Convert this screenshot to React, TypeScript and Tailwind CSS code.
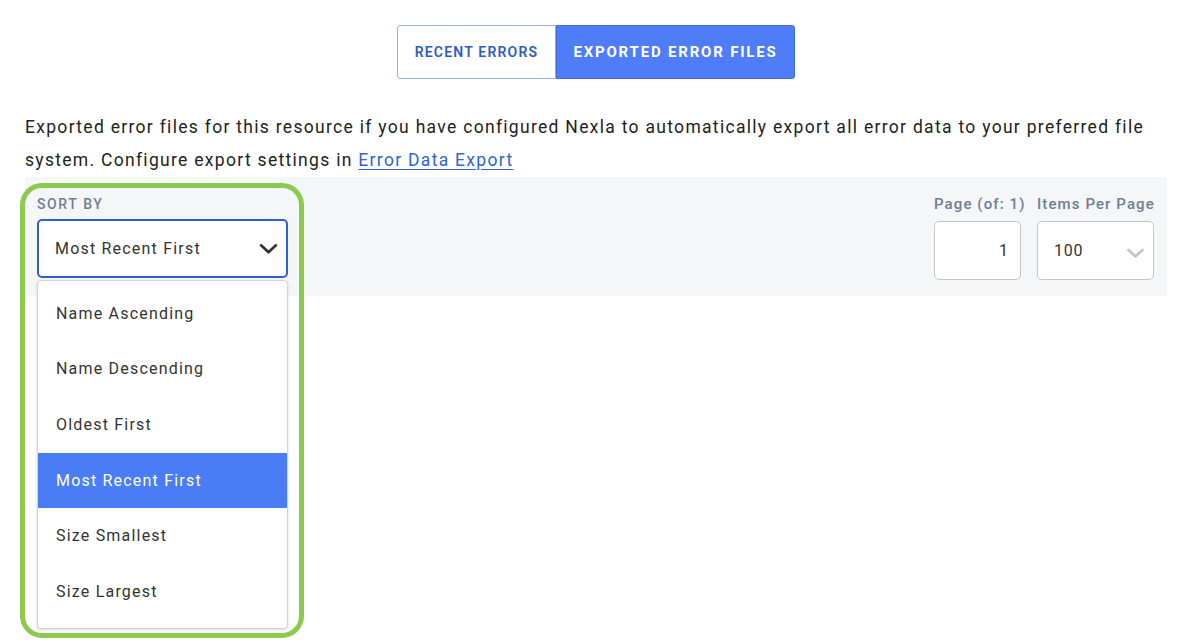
import { useState } from 'react'

const SORT_OPTIONS = [
  'Name Ascending',
  'Name Descending',
  'Oldest First',
  'Most Recent First',
  'Size Smallest',
  'Size Largest',
]

function Chevron({ className }: { className?: string }) {
  return (
    <svg viewBox="0 0 18 10" className={className} fill="none" stroke="currentColor" strokeWidth="2.6" strokeLinecap="round" strokeLinejoin="round">
      <path d="M2 2l7 6.5L16 2" />
    </svg>
  )
}

export default function App() {
  const [tab, setTab] = useState<'recent' | 'exported'>('exported')
  const [sort, setSort] = useState('Most Recent First')

  return (
    <div className="relative min-h-[641px] bg-white text-[#222] font-['Roboto',sans-serif]">
      <div className="flex justify-center pt-[25px]">
        <button
          onClick={() => setTab('recent')}
          className={`h-[54px] w-[159px] rounded-l-[3px] border text-[14px] font-semibold tracking-[1.2px] ${
            tab === 'recent' ? 'bg-[#4f7cf7] text-white border-[#3d69e6]' : 'bg-white text-[#2c5bc8] border-[#96ade8]'
          }`}
        >
          RECENT ERRORS
        </button>
        <button
          onClick={() => setTab('exported')}
          className={`h-[54px] w-[239px] rounded-r-[3px] border text-[15px] font-bold tracking-[1.8px] ${
            tab === 'exported' ? 'bg-[#4f7cf7] text-white border-[#3d69e6]' : 'bg-white text-[#2c5bc8] border-[#96ade8]'
          }`}
        >
          EXPORTED ERROR FILES
        </button>
      </div>

      <p className="mt-[32px] px-[25px] text-[17.5px] leading-[33px] tracking-[1.3px] text-[#222]">
        Exported error files for this resource if you have configured Nexla to automatically export all error data to your preferred file
        system. Configure export settings in{' '}
        <a href="#" className="text-[#2f63d6] underline underline-offset-[3px]">
          Error Data Export
        </a>
      </p>

      <div className="mx-[25px] flex h-[119px] items-start justify-between bg-[#f5f6f8] pl-[12px] pr-[13px] pt-[18px]">
        <div className="relative w-[251px]">
          <div className="text-[14px] font-medium leading-[18px] tracking-[1.6px] text-[#6f7e95]">SORT BY</div>
          <button className="mt-[6px] flex h-[59px] w-[251px] items-center justify-between rounded-[5px] border-2 border-[#2f5fd6] bg-white pl-[16px] pr-[8px] text-[16px] tracking-[1.2px] text-[#333]">
            <span>{sort}</span>
            <Chevron className="h-[11px] w-[19px] text-[#333]" />
          </button>
          <ul className="absolute left-0 top-full z-10 mt-[2px] w-[251px] rounded-[4px] border border-[#d4d4d4] bg-white pt-[5px] pb-[8px] shadow-[0_1px_3px_rgba(0,0,0,0.15)]">
            {SORT_OPTIONS.map((o) => (
              <li
                key={o}
                onClick={() => setSort(o)}
                className={`flex h-[55.6px] cursor-pointer items-center pl-[18px] text-[16px] tracking-[1.2px] ${
                  o === sort ? 'bg-[#4a7cf5] text-white' : 'text-[#333]'
                }`}
              >
                {o}
              </li>
            ))}
          </ul>
        </div>

        <div className="flex gap-[16px]">
          <div className="flex w-[87px] flex-col items-start">
            <div className="whitespace-nowrap text-[15px] font-medium leading-[18px] tracking-[1.1px] text-[#6f7e95]">Page (of: 1)</div>
            <div className="mt-[8px] flex h-[59px] w-[87px] items-center justify-end rounded-[5px] border border-[#c6c6c6] bg-white pr-[12px] text-[16px] text-[#333]">
              1
            </div>
          </div>
          <div className="flex w-[117px] flex-col items-start">
            <div className="whitespace-nowrap text-[15px] font-medium leading-[18px] tracking-[1.1px] text-[#6f7e95]">Items Per Page</div>
            <div className="mt-[8px] flex h-[59px] w-[117px] items-center justify-between rounded-[5px] border border-[#c6c6c6] bg-white pl-[16px] pr-[8px] text-[16px] tracking-[0.8px] text-[#333]">
              <span>100</span>
              <Chevron className="mt-[4px] h-[10px] w-[19px] text-[#c4c4c4]" />
            </div>
          </div>
        </div>
      </div>

      <div className="pointer-events-none absolute left-[20px] top-[183px] h-[455px] w-[284px] rounded-[22px] border-[5px] border-[#8dc94d]" />
    </div>
  )
}
